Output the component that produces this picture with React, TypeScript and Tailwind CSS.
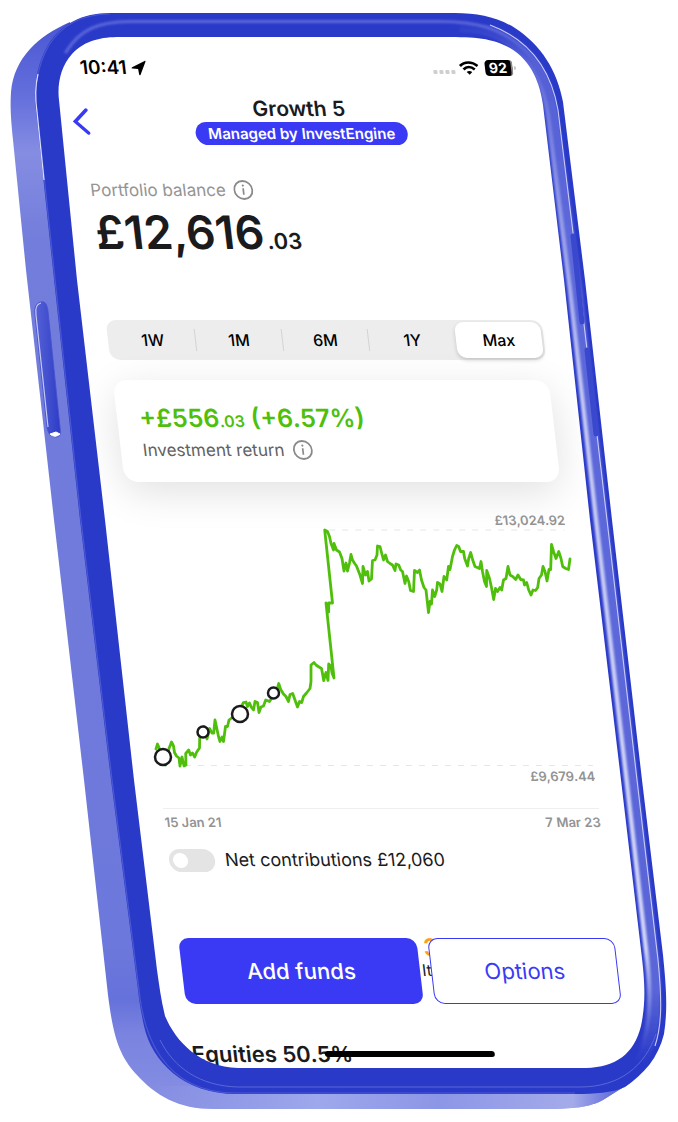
import { useState } from "react";

const ranges = ["1W", "1M", "6M", "1Y", "Max"];

const FACE =
  "M110 13 H455 C478 13 497 17 515 28 C541 45 557 70 563 102 L585 280 L612 520 L642 780 L663 955 C666 985 668 1008 664 1034 C658 1058 644 1074 625 1087 C612 1093 595 1094 575 1094 H236 C184 1094 152 1062 144 1026 C141 1012 139 1000 138 990 L111 780 L80 520 L53 270 L36 110 C33 90 36 66 48 45 C61 24 82 13 110 13 Z";
const SCREEN =
  "M120 37 H445 C475 37 492 38 510 48 C532 61 540 84 543 105 L564 280 L590 520 L621 780 L641 950 C645 982 646 1002 641 1026 C634 1054 616 1067 586 1068 H238 C200 1067 176 1042 165 1016 C161 1000 159 984 157 970 L134 780 L105 520 L77 280 L59 100 C57 84 61 66 72 54 C85 40 102 37 120 37 Z";
const SIDE =
  "M70 22 C38 36 14 58 11 92 C10 108 11 120 13 140 L26 270 L54 520 L84 780 L108 995 C113 1034 118 1054 136 1074 C156 1096 178 1109 214 1109 H540 C575 1109 590 1107 603 1100 L630 1083 L600 1060 H230 L60 110 Z";

const TREND =
  "156,749 157.5,744 160,750 163,757 165.5,765 169,748.5 171.5,742 173.5,746 174.5,752.5 176.5,756 179,758 180,766 182,757 184,766 186,765 185.7,753.5 188.7,750 190.5,755 192.5,753 194.7,757 196.7,752 199.5,748 199.7,738 201,730 204,726.5 207,739 209.5,728.5 212,733 213.7,733 215,720 216.5,727 218.5,736.5 220,741.5 222,737 223.5,741.5 225.5,726.5 227.5,726.5 229,720 233,717 240,709 243.5,702.5 246,702 247.5,706.5 249.5,703 251.5,707.5 253.5,710 255,701.5 257.5,702.5 259,712.5 261,707 263.5,706 265.7,700 269.5,701.5 271.7,698 276.5,691.5 278.7,683.5 280.7,689.5 283.5,694 286,696.5 288.5,701.5 290,694.5 292.7,693.5 295,700 297.5,707 299.5,701.5 301.7,702.5 303.5,696.5 306.5,693 310,688.5 311,681.5 311,665 314,662.5 316,665 319,667 321.5,668.5 322.5,673.5 323.7,680.5 326,672.5 328,680.5 328.7,664 331,666.5 332,673 334,678 326,603 328.7,612 328.7,603 332.5,603 324.7,530 327.5,531.5 329.5,536.5 331,543.5 333.5,550 334,543.5 336.5,550 339.5,552 342,558.5 344,571 346,563 347.5,571 349.5,563 351,554.5 352.5,560 354.7,563.5 356.5,566 360,575 362.5,583.5 363,566.5 365.5,575 367.5,571.5 369,581 371.5,579 372.5,560.5 375,560 377,555 377.5,546 380,546.5 381.5,552.5 383.5,560 385.5,555 387.5,561.5 390,563.5 392.5,565 395,570.5 396,564 398.7,565 400.7,570 402.5,571.5 405,583.5 406.5,576 408.7,581.5 410.5,590.5 413.5,591.5 414.5,570.5 417.5,572.5 419.5,570 421.5,580 424,587.5 426,590 428.5,612.5 430,601.5 431.5,604 432.5,590 434.7,596.5 436.7,590 437.5,582.5 440,584 442,591.5 444,576.5 446.7,580 448.5,566.5 450,569.5 452.5,556.5 454.5,550 456.7,545.5 458.7,546.5 460.5,551.5 463.5,551.5 464.7,558.5 467.5,566 468.7,558.5 470.7,552.5 472.7,560 475,566.5 479.5,568.5 481,561.5 482.5,571.5 484.5,581.5 486.5,586.5 486.7,570.5 489.5,578.5 491.5,587.5 493.7,599.5 495.5,588.5 497.5,591.5 500,587.5 501.7,590 503.5,580 506,578.5 508,566.5 510,575 512.7,576.5 515.7,579.5 518,575 520.7,579.5 523.5,580 524.5,585 526.7,582.5 528.7,590 531,595 533,590 535.5,590.5 537.7,587.5 539,578.5 541.5,575 543,566.5 545,571.5 547,581 549,569.5 550.7,569.5 551.5,544.5 553.5,551.5 556,558.5 558.7,551.5 561,558.5 562.7,566.5 565.7,568.5 568.5,569.5 570,559";

const deposits = [
  { x: 163, y: 757, r: 8 },
  { x: 203, y: 732, r: 5.5 },
  { x: 240, y: 714, r: 8 },
  { x: 273.5, y: 693, r: 5.5 },
];

function InfoButton({ label }: { label: string }) {
  return (
    <button type="button" aria-label={label} className="flex text-[#8a8a8a]">
      <svg viewBox="0 0 20 20" className="size-5" fill="none" stroke="currentColor">
        <circle cx="10" cy="10" r="9" strokeWidth="1.8" />
        <path d="M10 8.3v6.5" strokeWidth="1.7" />
        <circle cx="10" cy="5.6" r="1.1" fill="currentColor" stroke="none" />
      </svg>
    </button>
  );
}

function StatusBar() {
  return (
    <div className="-mr-1 flex h-6 items-center justify-between pl-1 text-black">
      <div className="flex items-center gap-1">
        <span className="text-[19px] leading-6 font-semibold">10:41</span>
        <svg viewBox="0 0 16 16" className="size-4" fill="currentColor">
          <path d="M14.4.9 1.2 7.2c-.9.5-.7 1.3.2 1.4l5.6.3.4 5.700c.1.9 1 1 1.400.2l6.400-13c.3-.6-.2-1.200-.8-.9Z" />
        </svg>
      </div>
      <div className="flex items-center gap-1">
        <div className="flex gap-0.5 pt-2">
          {[0, 1, 2, 3].map((n) => (
            <span key={n} className="size-1 rounded-[1px] bg-[#cfcfcf]" />
          ))}
        </div>
        <svg viewBox="0 0 20 14" className="h-[14px] w-5" fill="none" stroke="currentColor" strokeWidth="2.7">
          <path d="M1.2 5C6.2.3 13.8.3 18.8 5" />
          <path d="M4.4 8.4c3.3-3 7.9-3 11.2 0" />
          <path d="M10 13.7 7.2 11c1.6-1.4 4-1.4 5.6 0Z" fill="currentColor" stroke="none" />
        </svg>
        <div className="flex items-center gap-px pl-0.5">
          <span className="flex h-4 w-7 items-center justify-center rounded-[4px] border-r-2 border-[#8b8b8b] bg-black text-sm leading-4 font-bold text-white">
            92
          </span>
          <span className="h-1 w-0.5 rounded-r-full bg-[#c4c4c4]" />
        </div>
      </div>
    </div>
  );
}

function TrendChart() {
  return (
    <figure className="mt-[30px]">
      <div className="text-right text-[13px] leading-4 font-semibold text-[#939393]">£13,024.92</div>
      <svg
        viewBox="68 528 436 240"
        className="block w-full overflow-visible"
        role="img"
        aria-label="Portfolio value over time"
      >
        <g stroke="#e6e6e6" strokeDasharray="6 7">
          <path d="M267 530H502" />
          <path d="M95 765.5H503" />
        </g>
        {/* plotted on the upright page, so the handset tilt is taken back out */}
        <g transform="skewX(-6.7)">
          <polyline
            points={TREND}
            fill="none"
            stroke="#4fbf0c"
            strokeWidth="2.8"
            strokeLinejoin="round"
            strokeLinecap="round"
          />
          {deposits.map((d) => (
            <circle key={d.x} cx={d.x} cy={d.y} r={d.r} fill="#fff" stroke="#1b1b1d" strokeWidth="2.5" />
          ))}
        </g>
      </svg>
      <div className="text-right text-[13px] leading-4 font-semibold text-[#939393]">£9,679.44</div>
      <figcaption className="mt-6 flex justify-between border-t border-[#efefef] pt-[5px] text-[13px] leading-4 font-semibold text-[#939393]">
        <span>15 Jan 21</span>
        <span>7 Mar 23</span>
      </figcaption>
    </figure>
  );
}

function Handset() {
  return (
    <svg
      viewBox="0 0 678 1122"
      className="pointer-events-none absolute inset-x-0 top-0 w-full"
      aria-hidden="true"
    >
      <defs>
        <linearGradient id="side" x1="0" y1="0" x2="0" y2="1">
          <stop offset="0" stopColor="#4a57d2" />
          <stop offset="0.07" stopColor="#6570dc" />
          <stop offset="0.12" stopColor="#858de2" />
          <stop offset="0.2" stopColor="#737ddb" />
          <stop offset="0.85" stopColor="#6d78dc" />
          <stop offset="0.9" stopColor="#6672db" />
          <stop offset="0.93" stopColor="#7a83df" />
          <stop offset="1" stopColor="#8790e3" />
        </linearGradient>
        <linearGradient id="foot" gradientUnits="userSpaceOnUse" x1="150" y1="0" x2="630" y2="0">
          <stop offset="0" stopColor="#9aa4ea" stopOpacity="0" />
          <stop offset="0.35" stopColor="#9ea8ec" />
          <stop offset="0.6" stopColor="#8c96e6" />
          <stop offset="0.88" stopColor="#a4abea" />
          <stop offset="1" stopColor="#4a57d2" />
        </linearGradient>
        <linearGradient id="fade" gradientUnits="userSpaceOnUse" x1="0" y1="22" x2="0" y2="1062">
          <stop offset="0" stopColor="#5b66d8" stopOpacity="0" />
          <stop offset="0.04" stopColor="#5560d6" />
          <stop offset="0.2" stopColor="#5d68da" />
          <stop offset="0.93" stopColor="#5a66d8" />
          <stop offset="1" stopColor="#5a66d8" stopOpacity="0" />
        </linearGradient>
        <linearGradient id="gleam" gradientUnits="userSpaceOnUse" x1="0" y1="40" x2="0" y2="1050">
          <stop offset="0" stopColor="#8d95e6" stopOpacity="0" />
          <stop offset="0.15" stopColor="#8d95e6" />
          <stop offset="0.35" stopColor="#c3c7f3" />
          <stop offset="0.9" stopColor="#d2d6f7" />
          <stop offset="1" stopColor="#8d95e6" stopOpacity="0" />
        </linearGradient>
        <linearGradient id="key" x1="0" y1="0" x2="1" y2="0">
          <stop offset="0" stopColor="#5561d4" />
          <stop offset="0.45" stopColor="#4552d0" />
          <stop offset="1" stopColor="#2d3cc6" />
        </linearGradient>
        <filter id="soft" filterUnits="userSpaceOnUse" x="0" y="0" width="678" height="1122">
          <feGaussianBlur stdDeviation="1" />
        </filter>
        <mask id="cut" maskUnits="userSpaceOnUse" x="0" y="0" width="678" height="1122">
          <rect width="678" height="1122" fill="#fff" />
          <path d={SCREEN} fill="#000" />
        </mask>
      </defs>
      <g mask="url(#cut)">
        <path d={SIDE} fill="url(#side)" />
        <path d="M150 1086C170 1102 190 1109 214 1109H540C575 1109 590 1107 603 1100L630 1083Z" fill="url(#foot)" />
        <path d={FACE} fill="#2a3ac8" />
        <path
          d="M110 14C82 14 62 25 49 45C37 66 34 90 37 110L54 270L81 520L112 780L139 990C143 1030 160 1093 236 1093H575"
          fill="none"
          stroke="#4a58d3"
          strokeWidth="1.2"
        />
        <path
          d="M160 1040C174 1068 200 1086 238 1087H580C620 1087 645 1066 656 1034"
          fill="none"
          stroke="#5a67d8"
          strokeWidth="1"
        />
        <path
          d="M66 52C80 29 98 22 130 21.5H440C480 21.5 500 30 518 44C545 66 551 88 556 120L575 280"
          fill="none"
          stroke="#5b67da"
          strokeWidth="3"
          strokeLinecap="round"
          filter="url(#soft)"
        />
        <path
          d="M460 26C488 27 504 35 519 48C542 69 549 92 553 120L576 290L602 520L632 780L653 960C657 1005 655 1040 640 1062"
          fill="none"
          stroke="url(#fade)"
          strokeWidth="12"
          filter="url(#soft)"
        />
        <path
          d="M500 42C530 58 543 82 548 116L570 290L596 520L626.5 780L646 950C652 1000 649 1028 640 1050"
          fill="none"
          stroke="url(#gleam)"
          strokeWidth="4.5"
          filter="url(#soft)"
        />
        <path
          d="M490 25C530 40 551 70 558 110L580 290L607 520L637 780L658 960C662 1000 662 1025 655 1046"
          fill="none"
          stroke="#c9cdf5"
          strokeWidth="1.1"
        />
        <path d="M573 236L582 322M587 350L596 434" stroke="#3a48ce" strokeWidth="5" strokeLinecap="round" />
        <path d="M38 74C35 86 35 98 37 112L44 180" fill="none" stroke="#dcdff8" strokeWidth="1.2" />
        <path
          d="M41 302C36 303 34 307 35 315L47 427C48 434 51 437 56 437C60 437 61 434 60 427L48 311C47 304 45 301 41 302Z"
          fill="url(#key)"
          stroke="#4552cf"
          strokeWidth="0.8"
        />
        <path d="M41 303C36 304 35 308 36 315L48 427" fill="none" stroke="#c5caf4" strokeWidth="1.2" />
        <path d="M50 434C53 437 57 437 60 434L56 432Z" fill="#fff" stroke="#fff" strokeWidth="1" />
      </g>
    </svg>
  );
}

export default function App() {
  const [range, setRange] = useState("Max");
  const [showNet, setShowNet] = useState(false);

  return (
    <main className="overflow-hidden bg-white font-[Inter,sans-serif] text-[#1b1b1d]">
      <div className="relative mx-auto max-w-[678px]">
        <div className="origin-top skew-x-[6.7deg] pt-14 pr-[174px] pb-[54px] pl-[68px]">
          <StatusBar />

          <header className="mt-4 grid grid-cols-[1fr_auto_1fr] items-center">
            <button type="button" aria-label="Back" className="-ml-2.5 justify-self-start text-[#3a3af4]">
              <svg viewBox="0 0 18 28" className="h-7 w-[18px]" fill="none" stroke="currentColor" strokeWidth="3.4">
                <path d="M15 3 3 14.5 15 26" strokeLinecap="round" strokeLinejoin="miter" />
              </svg>
            </button>
            <div className="flex flex-col items-center">
              <h1 className="text-[21px] leading-[26px] font-semibold">Growth 5</h1>
              <span className="rounded-full bg-[#3a3af4] px-[13px] text-[15px] leading-[23px] font-semibold text-white">
                Managed by InvestEngine
              </span>
            </div>
          </header>

          <section className="mt-[35px]">
            <div className="flex h-5 items-center gap-2 text-[17px] leading-5 text-[#949494]">
              Portfolio balance
              <InfoButton label="About portfolio balance" />
            </div>
            <p className="mt-2 text-[46px] leading-[48px] font-semibold">
              £12,616<span className="ml-0.5 text-[22px] leading-none">.03</span>
            </p>
          </section>

          <div className="mt-16 grid h-10 grid-cols-5 rounded-[10px] bg-[#ededee] p-0.5">
            {ranges.map((r, i) => (
              <button
                key={r}
                type="button"
                aria-pressed={range === r}
                onClick={() => setRange(r)}
                className={
                  range === r
                    ? "rounded-[9px] bg-white text-base font-medium text-black shadow-[0_2px_4px_rgba(0,0,0,0.18)]"
                    : "flex items-center text-base font-medium text-black"
                }
              >
                {range === r ? (
                  r
                ) : (
                  <>
                    <span className="flex-1">{r}</span>
                    {i < 3 && <span className="h-[22px] w-px bg-[#d3d3d5]" />}
                  </>
                )}
              </button>
            ))}
          </div>

          <section className="mt-5 rounded-[14px] bg-white px-[22px] pt-[22px] pb-5 shadow-[0_10px_40px_rgba(0,0,0,0.12)]">
            <p className="text-[25px] leading-8 font-semibold text-[#4fbf0c]">
              +£556<span className="text-base leading-none">.03</span> (+6.57%)
            </p>
            <div className="mt-1 flex h-6 items-center gap-2 text-[17px] leading-6 text-[#626262]">
              Investment return
              <InfoButton label="About investment return" />
            </div>
          </section>

          <TrendChart />

          <label className="mt-[18px] flex h-6 items-center gap-[10px] text-lg leading-6">
            <input
              type="checkbox"
              checked={showNet}
              onChange={(e) => setShowNet(e.target.checked)}
              className="h-[23px] w-[46px] appearance-none rounded-full bg-[#e4e4e4] p-1 before:block before:size-[15px] before:rounded-full before:bg-white checked:bg-[#3a3af4] checked:before:ml-auto"
            />
            Net contributions £12,060
          </label>

          <div className="relative mt-[66px] flex gap-[11px]">
            {/* holdings legend peeking out from behind the actions */}
            <div className="absolute top-0 right-0 left-[240px] flex flex-col text-base leading-5">
              <span className="pl-1 text-2xl leading-5 font-semibold text-[#ff9d1c]">3</span>
              <span className="mt-0.5">It</span>
            </div>
            <button
              type="button"
              className="relative h-[66px] flex-[240] rounded-[10px] bg-[#3a3af4] text-[22px] font-medium text-white"
            >
              Add funds
            </button>
            <button
              type="button"
              className="relative h-[66px] flex-[186] rounded-[10px] border border-[#3a3af4] bg-white text-[22px] text-[#3a3af4]"
            >
              Options
            </button>
          </div>

          <div className="relative mt-9">
            <h2 className="text-[22px] leading-7 font-semibold">Equities 50.5%</h2>
            <div className="absolute inset-x-0 top-[11px] mx-auto h-1.5 w-[170px] rounded-full bg-black" />
          </div>
        </div>
        <Handset />
      </div>
    </main>
  );
}
